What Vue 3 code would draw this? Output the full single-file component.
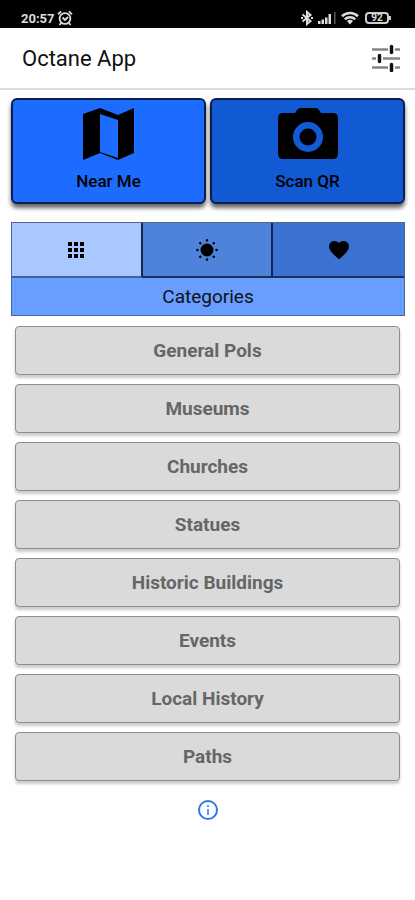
<script setup>
import { ref } from 'vue'

const active = ref(0)
const tabs = ['Categories', 'Highlights', 'Favourites']
const categories = [
  'General Pols',
  'Museums',
  'Churches',
  'Statues',
  'Historic Buildings',
  'Events',
  'Local History',
  'Paths',
]
</script>

<template>
  <div class="app">
    <div class="status">
      <span class="clock">20:57</span>
      <svg class="alarm" viewBox="0 0 16 16" fill="none" stroke="currentColor" stroke-width="1.8">
        <circle cx="8" cy="8.5" r="5.4" />
        <path d="M1 4.2 4.2 1.4M15 4.2 11.8 1.4M5.5 7.5 8 10l3-3M4 13l-1.5 2M12 13l1.5 2" />
      </svg>
      <span class="spacer"></span>
      <svg class="bluetooth" viewBox="0 0 12 16" fill="none" stroke="currentColor" stroke-width="2">
        <path d="M1.500 4.500 9.500 11 6 14V2l3.500 3-8 6.500" />
        <path d="M0 8h2M10 8h2" />
      </svg>
      <svg class="signal" viewBox="0 0 18 14" fill="currentColor">
        <path d="M0 10h2.500v3H0zM3.500 8.500H6V13H3.500zM7 6.500h2.500V13H7zM10.500 3H13v10h-2.500z" />
        <path d="M16 1h1.500v12H16z" opacity=".4" />
      </svg>
      <svg class="wifi" viewBox="0 0 18 14" fill="none" stroke="currentColor" stroke-width="2.600">
        <path d="M1 5.200a11.500 11.500 0 0 1 16 0M3.800 8.400a7.500 7.500 0 0 1 10.400 0" />
        <path d="M6 10a4.500 4.500 0 0 1 6 0L9 13.500z" fill="currentColor" stroke="none" />
      </svg>
      <span class="battery">92</span>
    </div>

    <header class="bar">
      <h1>Octane App</h1>
      <button class="filter" aria-label="Filters">
        <svg viewBox="0 0 28 28">
          <path d="M0 5.500h28M0 14.500h28M0 23.500h28" stroke="#858585" stroke-width="2.500" />
          <path d="M16 5.500h7M4 14.500h7M16 23.500h7" stroke="#fff" stroke-width="4" />
          <path d="M19.500 2.500v6M7.500 11.500v6M19.500 20.500v6" stroke="#111" stroke-width="3.500" stroke-linecap="round" />
        </svg>
      </button>
    </header>

    <main>
      <div class="actions">
        <button class="action near">
          <svg viewBox="0 0 60 52">
            <path fill-rule="evenodd" d="M4 6 21 0l18 7L55 0v45l-16 7-18-7L4 52zM21 6v38l18 6V12z" />
          </svg>
          <span>Near Me</span>
        </button>
        <button class="action scan">
          <svg viewBox="0 0 60 52">
            <path fill-rule="evenodd" d="M23 0h15q2 0 3 2l2 3h12q5 0 5 5v36q0 5-5 5H5q-5 0-5-5V10q0-5 5-5h12l2-3q1-2 4-2zM30 14a15 15 0 1 0 0 30 15 15 0 0 0 0-30z" />
            <circle cx="30" cy="29" r="8.500" />
          </svg>
          <span>Scan QR</span>
        </button>
      </div>

      <section class="panel">
        <div class="tabs">
          <button
            v-for="(tab, i) in tabs"
            :key="tab"
            :class="['tab', 'tab-' + i, { active: active === i }]"
            :aria-label="tab"
            @click="active = i"
          >
            <svg v-if="i === 0" viewBox="0 0 24 24">
              <path d="M4 8h4V4H4zm6 12h4v-4h-4zm-6 0h4v-4H4zm0-6h4v-4H4zm6 0h4v-4h-4zm6-10v4h4V4zm-6 4h4V4h-4zm6 6h4v-4h-4zm0 6h4v-4h-4z" />
            </svg>
            <svg v-else-if="i === 1" viewBox="0 0 24 24">
              <circle cx="12" cy="12" r="6.500" />
              <g v-for="n in 8" :key="n" :transform="`rotate(${n * 45} 12 12)`">
                <ellipse cx="12" cy="2.400" rx="1.200" ry="1.300" />
              </g>
            </svg>
            <svg v-else viewBox="0 0 24 24">
              <path d="m12 21.350-1.450-1.320C5.400 15.360 2 12.280 2 8.500 2 5.420 4.420 3 7.500 3c1.740 0 3.410.810 4.500 2.090C13.090 3.810 14.760 3 16.500 3 19.580 3 22 5.420 22 8.500c0 3.780-3.400 6.860-8.550 11.540z" />
            </svg>
          </button>
        </div>
        <h2>{{ tabs[active] }}</h2>
      </section>

      <div class="list">
        <button v-for="name in categories" :key="name" class="category">{{ name }}</button>
      </div>
    </main>

    <button class="info" aria-label="Information">
      <svg viewBox="0 0 20 20">
        <circle cx="10" cy="10" r="9" fill="none" stroke="#2f78e8" stroke-width="2" />
        <path d="M10 5v2M10 9v6" stroke="#6c8ff0" stroke-width="2" />
      </svg>
    </button>
  </div>
</template>

<style>
body {
  margin: 0;
  background: #fff;
}
</style>

<style scoped>
.app {
  font-family: Roboto, "Liberation Sans", sans-serif;
  color: #111;
}

button {
  font: inherit;
  color: inherit;
  margin: 0;
  padding: 0;
  border: 0;
  background: none;
  cursor: pointer;
}

svg {
  display: block;
}

.status {
  display: flex;
  align-items: center;
  height: 28px;
  box-sizing: border-box;
  padding: 8px 24px 0 21px;
  background: #000;
  color: #ddd;
}

.clock {
  font-size: 13px;
  font-weight: 700;
}

.spacer {
  flex: 1;
}

.alarm {
  width: 16px;
  height: 16px;
  margin-left: 2px;
}

.bluetooth {
  width: 12px;
  height: 16px;
}

.signal {
  width: 18px;
  height: 14px;
  margin-left: 5px;
}

.wifi {
  width: 18px;
  height: 14px;
  margin-left: 5px;
}

.battery {
  position: relative;
  box-sizing: border-box;
  width: 24px;
  height: 12px;
  margin: 0 2px 0 6px;
  border: 2px solid #ccc;
  border-radius: 4px;
  font-size: 10px;
  font-weight: 700;
  line-height: 8px;
  text-align: center;
}

.battery::after {
  content: "";
  position: absolute;
  top: 2px;
  right: -4px;
  width: 2px;
  height: 4px;
  background: #ccc;
}

.bar {
  display: flex;
  align-items: center;
  justify-content: space-between;
  height: 60px;
  padding: 0 15px 0 22px;
  border-bottom: 2px solid #dcdcdc;
}

h1 {
  margin: 0;
  font-size: 22px;
  font-weight: 400;
}

.filter svg {
  width: 28px;
  height: 28px;
}

main {
  padding: 8px 10px 0 11px;
}

.actions {
  display: grid;
  grid-template-columns: 1fr 1fr;
  gap: 4px;
}

.action {
  display: flex;
  flex-direction: column;
  align-items: center;
  height: 106px;
  box-sizing: border-box;
  padding-top: 8px;
  border: 2px solid #0a1f4d;
  border-radius: 6px;
  box-shadow: 0 4px 4px rgba(0, 0, 0, 0.6);
  color: #000;
  font-size: 17px;
  font-weight: 500;
  line-height: 20px;
}

.action svg {
  width: 60px;
  height: 52px;
  margin-bottom: 11px;
}

.near {
  background: #1c6dff;
}

.scan {
  background: #1259d4;
}

.panel {
  margin-top: 18px;
  border: 1px solid #4a6699;
  background: #689eff;
}

.tabs {
  display: grid;
  grid-template-columns: repeat(3, 1fr);
}

.tab {
  display: flex;
  align-items: center;
  justify-content: center;
  height: 55px;
  border-bottom: 2px solid #1b3157;
}

.tab:not(:last-child) {
  border-right: 2px solid #14264a;
}

.tab svg {
  width: 24px;
  height: 24px;
}

.tab-0 {
  background: #a9c8ff;
}

.tab-0.active {
  border-bottom-color: #41639c;
}

.tab-1 {
  background: #4f83db;
}

.tab-2 {
  background: #3b71d1;
}

h2 {
  margin: 0;
  font-size: 19px;
  font-weight: 400;
  line-height: 37px;
  text-align: center;
}

.list {
  display: grid;
  gap: 9px;
  padding: 10px 5px 0 4px;
}

.category {
  height: 49px;
  box-sizing: border-box;
  border: 1px solid #8e8e8e;
  border-radius: 4px;
  background: #dadada;
  box-shadow: 0 3px 3px rgba(0, 0, 0, 0.2);
  color: #666;
  font-size: 19px;
  font-weight: 700;
}

.info {
  display: block;
  margin: 19px auto 0;
}

.info svg {
  width: 20px;
  height: 20px;
}
</style>
